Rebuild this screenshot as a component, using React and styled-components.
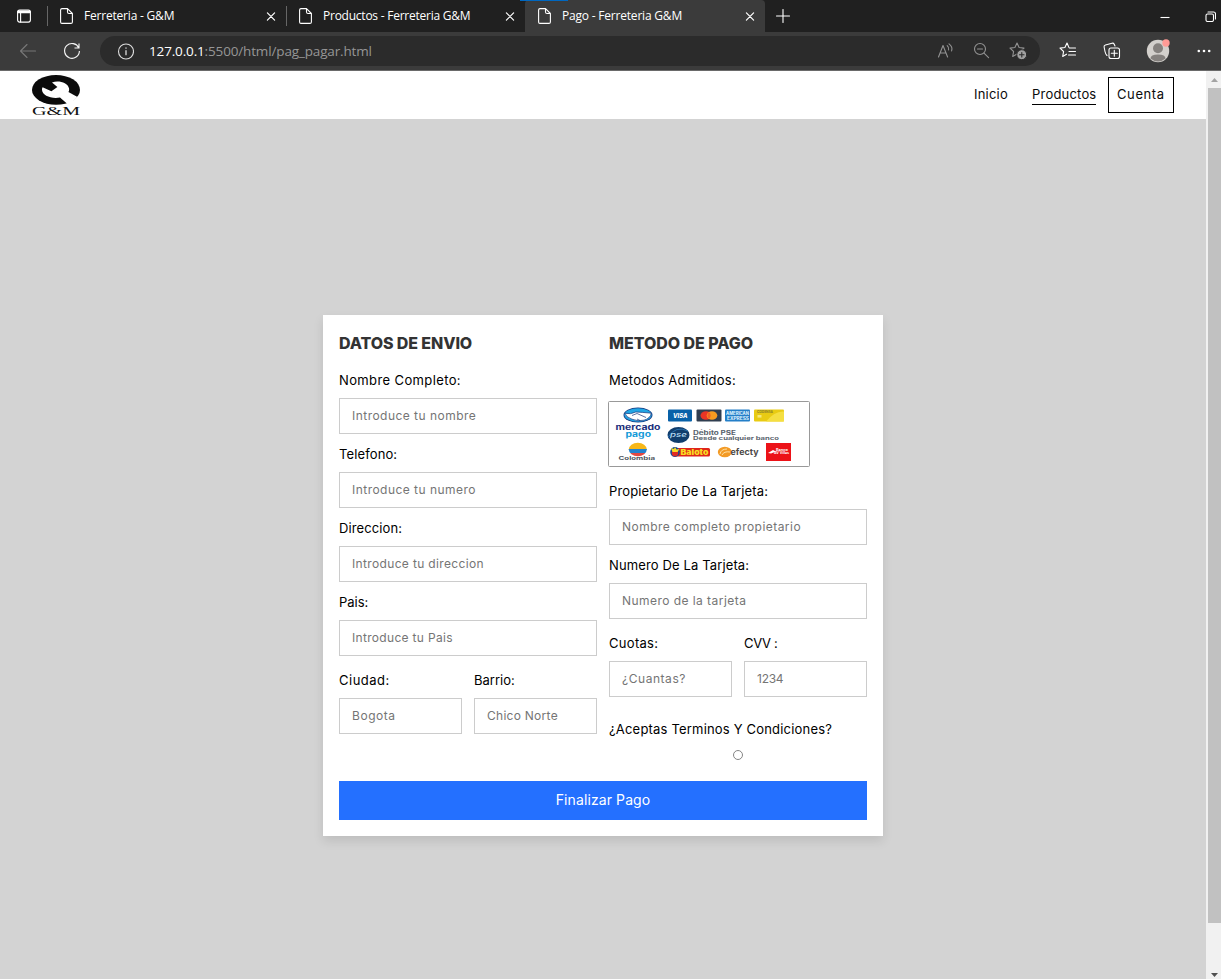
import React from 'react';
import styled, { createGlobalStyle } from 'styled-components';

const GlobalStyle = createGlobalStyle`
  *, *::before, *::after { box-sizing: border-box; }
  html, body { margin: 0; height: 100%; overflow: hidden; }
  body { font-family: Inter, 'Liberation Sans', sans-serif; background: #d3d3d3; }
  input, button { font-family: inherit; }
`;

const Window = styled.div`
  width: 1221px;
  height: 979px;
  display: flex;
  flex-direction: column;
  overflow: hidden;
`;

/* ---------- browser chrome ---------- */

const TabStrip = styled.div`
  display: flex;
  height: 32px;
  flex: none;
  background: #202020;
  color: #fff;
`;

const TabMenu = styled.div`
  width: 47px;
  display: flex;
  align-items: center;
  padding-left: 16px;
`;

const Tab = styled.div`
  width: ${(p) => p.$width}px;
  display: flex;
  align-items: center;
  padding: 0 10px 0 ${(p) => (p.$active ? 13 : 12)}px;
  color: #fff;
  font: 12px/16px 'Open Sans', 'Noto Sans', sans-serif;
  background: ${(p) => (p.$active ? '#3b3b3b' : 'transparent')};
  border-radius: ${(p) => (p.$active ? '4px 4px 0 0' : '0')};
`;

const Divider = styled.span`
  width: 1px;
  height: 20px;
  margin-top: 6px;
  background: #666;
`;

const TabTitle = styled.span`
  flex: 1;
  margin-left: 11px;
  white-space: nowrap;
  letter-spacing: ${(p) => p.$spacing}px;
`;

const NewTab = styled.div`
  display: flex;
  align-items: center;
  padding-left: 11px;
  flex: 1;
`;

const WindowButtons = styled.div`
  display: flex;
  align-items: center;
  gap: 35px;
  width: 61px;
  overflow: hidden;
`;

const Accent = styled.div`
  position: absolute;
  left: 520px;
  top: 0;
  width: 48px;
  height: 1px;
  background: #0067c0;
`;

const Toolbar = styled.div`
  display: flex;
  align-items: center;
  flex: none;
  height: 39px;
  background: #3b3b3b;
  border-bottom: 1px solid #6a6a6a;
  padding: 0 9px 0 19px;
`;

const Reload = styled.svg`
  margin-left: 26px;
`;

const AddressBar = styled.div`
  display: flex;
  align-items: center;
  width: 940px;
  height: 30px;
  margin-left: 19px;
  padding: 0 13px 0 17px;
  border-radius: 15px;
  background: #2b2b2b;
`;

const Url = styled.span`
  flex: 1;
  margin-left: 15px;
  font: 13.5px/20px 'Open Sans', 'Noto Sans', sans-serif;
  letter-spacing: -0.15px;
  color: #969696;
  b { font-weight: 400; color: #fff; }
`;

const AddressActions = styled.div`
  display: flex;
  align-items: center;
  gap: 18px;
`;

const ToolbarActions = styled.div`
  flex: 1;
  display: flex;
  align-items: center;
  justify-content: space-between;
  padding-left: 19px;
`;

/* ---------- page ---------- */

const Viewport = styled.div`
  flex: 1;
  display: flex;
  min-height: 0;
`;

const Page = styled.div`
  width: 1206px;
  display: flex;
  flex-direction: column;
  background: #d3d3d3;
`;

const Header = styled.header`
  flex: none;
  height: 48px;
  display: flex;
  align-items: center;
  justify-content: space-between;
  padding: 0 32px 0 31px;
  background: #fff;
`;

const Nav = styled.nav`
  display: flex;
  align-items: center;
  gap: 24px;
  font-size: 13px;
  color: #0b0b0b;
`;

const NavLink = styled.a`
  line-height: 20px;
  margin-bottom: 2px;
  letter-spacing: ${(p) => p.$spacing}px;
  border-bottom: 1px solid ${(p) => (p.$active ? '#000' : 'transparent')};
  width: ${(p) => p.$width}px;
  white-space: nowrap;
`;

const AccountLink = styled.a`
  width: 66px;
  height: 36px;
  margin-left: -12px;
  padding-left: 8px;
  border: 1px solid #000;
  line-height: 32px;
  letter-spacing: 0.6px;
`;

const Main = styled.main`
  flex: 1;
  display: flex;
  justify-content: center;
  align-items: flex-start;
  padding-top: 196px;
`;

const Card = styled.form`
  width: 560px;
  height: 521px;
  padding: 16px;
  background: #fff;
  box-shadow: 0 5px 10px rgba(0, 0, 0, 0.1);
`;

const Columns = styled.div`
  display: flex;
  gap: 12px;
  height: 450px;
`;

const Column = styled.section`
  width: 258px;
`;

const Heading = styled.h3`
  margin: 0 0 15px;
  font-size: 16px;
  font-weight: 800;
  line-height: 24px;
  color: #333;
  white-space: nowrap;
  letter-spacing: ${(p) => p.$spacing}px;
`;

const FieldBox = styled.div`
  flex: 1;
  min-width: 0;
  margin-bottom: 10px;
`;

const Label = styled.label`
  display: block;
  height: 20px;
  font-size: 13px;
  line-height: 20px;
  color: #000;
  white-space: nowrap;
  letter-spacing: ${(p) => p.$spacing || 0}px;
`;

const Input = styled.input`
  display: block;
  width: 100%;
  height: 36px;
  margin-top: 8px;
  padding: 0 12px 2px;
  border: 1px solid #ccc;
  border-radius: 0;
  outline: none;
  background: #fff;
  font-size: 12px;
  letter-spacing: ${(p) => p.$spacing || 0}px;
  &::placeholder { color: #757575; opacity: 1; }
`;

const Split = styled.div`
  display: flex;
  gap: 12px;
  padding-top: 4px;
`;

const Methods = styled.svg`
  display: block;
  margin: 9px 0 12px -3px;
`;

const Terms = styled.div`
  padding-top: 12px;
`;

const Radio = styled.span`
  display: block;
  width: 10px;
  height: 10px;
  margin: 11px 0 0 124px;
  border: 1px solid #858585;
  border-radius: 50%;
`;

const Submit = styled.button`
  display: block;
  width: 100%;
  height: 39px;
  padding: 0 0 2px;
  border: 0;
  background: #2470ff;
  color: #fff;
  font-size: 14px;
  line-height: 37px;
  letter-spacing: 0.1px;
`;

const Scrollbar = styled.div`
  width: 15px;
  display: flex;
  flex-direction: column;
  align-items: flex-end;
  background: #f1f1f1;
`;

const Arrow = styled.svg`
  flex: none;
  display: block;
`;

const Thumb = styled.div`
  width: 13px;
  height: 835px;
  background: #c1c1c1;
`;

/* ---------- icons ---------- */

const Icon = ({ w = 16, h = w, color = '#fff', children }) => (
  <svg width={w} height={h} viewBox={`0 0 ${w} ${h}`} fill="none" stroke={color} strokeWidth="1.1" strokeLinecap="round" strokeLinejoin="round">
    {children}
  </svg>
);

const PageIcon = () => (
  <Icon w={13} h={16}>
    <path d="M2 .6h5.5l4.9 4.9v8.4a1.5 1.5 0 0 1-1.5 1.5H2A1.5 1.5 0 0 1 .6 13.9V2A1.5 1.5 0 0 1 2 .6zM7.5.6V4A1.5 1.5 0 0 0 9 5.5h3.4" />
  </Icon>
);

const CloseIcon = () => (
  <Icon w={10}><path d="M1.4 1.9l7.2 7.2M8.6 1.9L1.4 9.1" strokeWidth="1.2" /></Icon>
);

const STAR = 'M8 1l2.1 4.5 4.9.6-3.6 3.4.9 4.9L8 12l-4.3 2.4.9-4.9L1 6.1l4.9-.6z';

const Logo = () => (
  <svg width="50" height="46" viewBox="0 0 50 46">
    <ellipse cx="25" cy="17.9" rx="24" ry="14.9" fill="#0b0b0b" />
    <path d="M21 10.4C28 8.2 36.6 10.6 38 16.3c.3 1.5.1 2.7-.6 3.8L46.5 25 42 29.3 37.6 33 29 25.6C19.5 27 11.6 23.5 11 18.1c-.1-1.2.1-2 .6-2.9l8.8 4.1 6-4.4z" fill="#fff" />
    <text x="1" y="43" fontFamily="'Liberation Serif', serif" fontSize="12" fill="#111" textLength="48" lengthAdjust="spacingAndGlyphs">G&amp;M</text>
  </svg>
);

const T = ({ x, y, w, s, fill, weight = 700, italic, children }) => (
  <text x={x} y={y} fontSize={s} fill={fill} fontWeight={weight} fontStyle={italic ? 'italic' : 'normal'} textLength={w} lengthAdjust="spacingAndGlyphs" fontFamily="Inter, sans-serif">{children}</text>
);

const PaymentMethods = () => (
  <Methods width="206" height="70" viewBox="0 0 206 70">
    <rect x="2.5" y="2.5" width="201" height="65" rx="1" fill="#fff" stroke="#999" />
    <ellipse cx="32" cy="16" rx="14.5" ry="7.5" fill="#17367c" />
    <ellipse cx="32" cy="16" rx="13.7" ry="6.7" fill="#22a5e4" />
    <path d="M18.8 14.2q6 1.5 11-1.2 6 .2 15.5 1.2-1 5.2-7.3 7-6 1.5-12-1-6-2-7.2-6z" fill="#fff" stroke="#17367c" strokeWidth=".7" />
    <path d="M26 16.5l5-2 9 4M31 20l3 1.5" fill="none" stroke="#17367c" strokeWidth=".7" />
    <T x="9.5" y="31" w="45" s="7.5" fill="#1c2f7c">mercado</T>
    <T x="19.5" y="38" w="25.5" s="7.5" fill="#159bd8">pago</T>
    <clipPath id="flag"><ellipse cx="31.8" cy="50.5" rx="9" ry="6.7" /></clipPath>
    <g clipPath="url(#flag)">
      <path d="M22 43h20v8H22z" fill="#f7b718" />
      <path d="M22 50h20v4H22z" fill="#2383cf" />
      <path d="M22 54h20v5H22z" fill="#e34842" />
    </g>
    <T x="12.5" y="61" w="36.5" s="5" fill="#4d555d">Colombia</T>
    <rect x="62" y="10.5" width="24" height="12" rx="1" fill="#0861a8" />
    <T x="67" y="19.2" w="14.5" s="6" fill="#fff" weight={800} italic>VISA</T>
    <rect x="90.5" y="10.5" width="25" height="12" rx="1" fill="#303e50" />
    <ellipse cx="100" cy="16.5" rx="5.5" ry="4.3" fill="#e93525" />
    <ellipse cx="106" cy="16.5" rx="5.3" ry="4.3" fill="#f79b20" />
    <path d="M103 13a4.6 4.6 0 0 1 0 7 4.6 4.6 0 0 1 0-7z" fill="#f16024" />
    <rect x="119" y="10.5" width="25" height="12" rx="1" fill="#247fc8" />
    <T x="120" y="16" w="23" s="4.3" fill="#e2f5ff">AMERICAN</T>
    <T x="121" y="20.8" w="22" s="4.3" fill="#e2f5ff">EXPRESS</T>
    <rect x="148" y="10.5" width="30" height="12" rx="1" fill="#e9cb13" />
    <path d="M160 22.5q9-11 18-10v10z" fill="#f5df42" />
    <T x="151" y="14" w="16" s="3.5" fill="#8b812c">CODENSA</T>
    <rect x="151.5" y="16" width="4" height="2.6" fill="#f6e87a" />
    <ellipse cx="72.5" cy="36" rx="11" ry="8" fill="#103d6c" />
    <path d="M62 38q8-12 20-6" stroke="#276eaa" fill="none" />
    <T x="64" y="38.3" w="17" s="7" fill="#b8dcf2" weight={500} italic>pse</T>
    <T x="87" y="36.2" w="43" s="5.5" fill="#59636d">Débito PSE</T>
    <T x="87" y="41" w="86" s="5.2" fill="#59636d">Desde cualquier banco</T>
    <rect x="66" y="49" width="38" height="8.5" rx="1.5" fill="#df2619" />
    <ellipse cx="69" cy="53" rx="4.8" ry="5" fill="#174994" />
    <circle cx="69" cy="54" r="3.2" fill="#e12b23" />
    <path d="M65 49l3 1 1-2 1.5 2.5 3-.5-2 3h-5z" fill="#f8dc23" />
    <T x="74.5" y="56" w="28" s="7.7" fill="#f8dc23" weight={900}>Baloto</T>
    <ellipse cx="118.8" cy="53" rx="7" ry="5.2" fill="#f39a25" />
    <path d="M114 55q1-5 7-5m-5 6q2-4 8-3" fill="none" stroke="#ffe2a5" strokeWidth="1" />
    <T x="124.5" y="55.7" w="28" s="8" fill="#4c4947">efecty</T>
    <rect x="160" y="44" width="25" height="18" fill="#ec1218" />
    <path d="M162 54l5-3 3 1.5-5 2z" fill="#fff" />
    <T x="170" y="52" w="12" s="3.5" fill="#fff">Banco</T>
    <T x="168" y="55.2" w="15" s="3.2" fill="#fff">AV Villas</T>
  </Methods>
);

const Field = ({ label, placeholder, ls, ps }) => (
  <FieldBox>
    <Label $spacing={ls}>{label}</Label>
    <Input placeholder={placeholder} $spacing={ps} />
  </FieldBox>
);

const BrowserTab = ({ title, active, width, spacing }) => (
  <Tab $active={active} $width={width}>
    <PageIcon />
    <TabTitle $spacing={spacing}>{title}</TabTitle>
    <CloseIcon />
  </Tab>
);

export default function App() {
  return (
    <Window>
      <GlobalStyle />
      <TabStrip>
        <TabMenu>
          <Icon w={16}><rect x="1.6" y="2.1" width="12.8" height="12" rx="2" /><path d="M2.4 4h11.2" strokeWidth="2.4" /><path d="M4.6 5v9" /></Icon>
        </TabMenu>
        <Divider />
        <BrowserTab title="Ferreteria - G&M" width={238} spacing={-0.2} />
        <Divider />
        <BrowserTab title="Productos - Ferreteria G&M" width={238} spacing={-0.24} />
        <BrowserTab title="Pago - Ferreteria G&M" width={240} spacing={-0.2} active />
        <NewTab><Icon w={14}><path d="M7 .5v13M.5 7h13" /></Icon></NewTab>
        <WindowButtons>
          <Icon w={10}><path d="M.5 6.5h9" strokeLinecap="butt" /></Icon>
          <Icon w={11}><rect x="1" y="3" width="7.5" height="7.5" rx="1.5" /><path d="M3 1h5.5a2 2 0 0 1 2 2v5" /></Icon>
        </WindowButtons>
        <Accent />
      </TabStrip>
      <Toolbar>
        <Icon w={18} h={16} color="#777"><path d="M16.5 8H1.5M8 1.5L1.5 8 8 14.5" /></Icon>
        <Reload width="18" height="18" viewBox="0 0 18 18" fill="none" stroke="#f4f4f4" strokeWidth="1.15"><path d="M15.8 6A7.4 7.4 0 1 0 16.4 9M16 1.5V6h-4.5" /></Reload>
        <AddressBar>
          <Icon w={17} color="#ddd"><circle cx="9" cy="8.5" r="7.5" /><path d="M9 7.7v4M9 5v.2" strokeWidth="1.3" /></Icon>
          <Url><b>127.0.0.1</b>:5500/html/pag_pagar.html</Url>
          <AddressActions>
            <Icon w={18} h={16} color="#929292"><path d="M1.5 14L6 2.5 10.6 14M3.2 10h5.7M10.2 2.7q2 1.7 1.4 4.2M12 .9q4 3 2.6 7" /></Icon>
            <Icon w={18} color="#929292"><circle cx="7" cy="7" r="5.5" /><path d="M11 11.2l4.6 4.4M4.5 7h5" /></Icon>
            <Icon w={18} color="#929292"><path d={STAR} /><circle cx="12.8" cy="12.7" r="5" fill="#a0a0a0" stroke="#2b2b2b" strokeWidth="1" /><path d="M10.5 12.7H15M12.8 10.5V15" stroke="#2b2b2b" /></Icon>
          </AddressActions>
        </AddressBar>
        <ToolbarActions>
          <Icon w={18}><path d="M10 5.6L8 1 5.9 5.5 1 6.1l3.6 3.4-.9 4.9L7.5 12.2M10.5 6H16.5M10 9.5h6.5M9.5 13H16.5" /></Icon>
          <Icon w={18}><rect x="6" y="6" width="10.5" height="10.5" rx="2" /><path d="M11.3 8.3v6M8.3 11.3h6M4 13.5Q2.5 12 2 9.5L1.1 5Q.8 3.4 2.4 3L9 1.2q1.6-.3 2.2 1L12 4" /></Icon>
          <svg width="24" height="24" viewBox="0 0 24 24">
            <circle cx="12" cy="12" r="11.2" fill="#d3d0cc" />
            <circle cx="12" cy="9.3" r="5" fill="#85817e" />
            <path d="M4.5 19.5q0-4 7.5-4t7.5 4a11.2 11.2 0 0 1-15 0z" fill="#85817e" />
            <circle cx="20" cy="4" r="3.7" fill="#ff9b96" />
          </svg>
          <Icon w={16}><g fill="#fff" stroke="none"><circle cx="2.8" cy="8" r="1.3" /><circle cx="8" cy="8" r="1.3" /><circle cx="13.2" cy="8" r="1.3" /></g></Icon>
        </ToolbarActions>
      </Toolbar>
      <Viewport>
        <Page>
          <Header>
            <Logo />
            <Nav>
              <NavLink $width={34} $spacing={0.2}>Inicio</NavLink>
              <NavLink $width={64} $active $spacing={0.2}>Productos</NavLink>
              <AccountLink>Cuenta</AccountLink>
            </Nav>
          </Header>
          <Main>
            <Card>
              <Columns>
                <Column>
                  <Heading $spacing={-0.1}>DATOS DE ENVIO</Heading>
                  <Field label="Nombre Completo:" ls={0.38} placeholder="Introduce tu nombre" ps={0.47} />
                  <Field label="Telefono:" ls={0.12} placeholder="Introduce tu numero" ps={0.47} />
                  <Field label="Direccion:" ls={0.1} placeholder="Introduce tu direccion" ps={0.35} />
                  <Field label="Pais:" placeholder="Introduce tu Pais" ps={0.32} />
                  <Split>
                    <Field label="Ciudad:" ls={0.5} placeholder="Bogota" ps={0.55} />
                    <Field label="Barrio:" placeholder="Chico Norte" ps={0.27} />
                  </Split>
                </Column>
                <Column>
                  <Heading $spacing={-0.06}>METODO DE PAGO</Heading>
                  <Label $spacing={0.23}>Metodos Admitidos:</Label>
                  <PaymentMethods />
                  <Field label="Propietario De La Tarjeta:" ls={0.13} placeholder="Nombre completo propietario" ps={0.46} />
                  <Field label="Numero De La Tarjeta:" ls={0.13} placeholder="Numero de la tarjeta" ps={0.45} />
                  <Split>
                    <Field label="Cuotas:" ls={0.3} placeholder="¿Cuantas?" ps={0.55} />
                    <Field label="CVV :" ls={-0.35} placeholder="1234" ps={-0.25} />
                  </Split>
                  <Terms>
                    <Label $spacing={0.19}>¿Aceptas Terminos Y Condiciones?</Label>
                    <Radio />
                  </Terms>
                </Column>
              </Columns>
              <Submit type="button">Finalizar Pago</Submit>
            </Card>
          </Main>
        </Page>
        <Scrollbar>
          <Arrow width="13" height="17" viewBox="0 0 13 17"><path d="M3 11l3.5-4 3.5 4z" fill="#a3a3a3" /></Arrow>
          <Thumb />
          <Arrow width="13" height="56" viewBox="0 0 13 56"><path d="M3 50h7l-3.5 4z" fill="#505050" /></Arrow>
        </Scrollbar>
      </Viewport>
    </Window>
  );
}
